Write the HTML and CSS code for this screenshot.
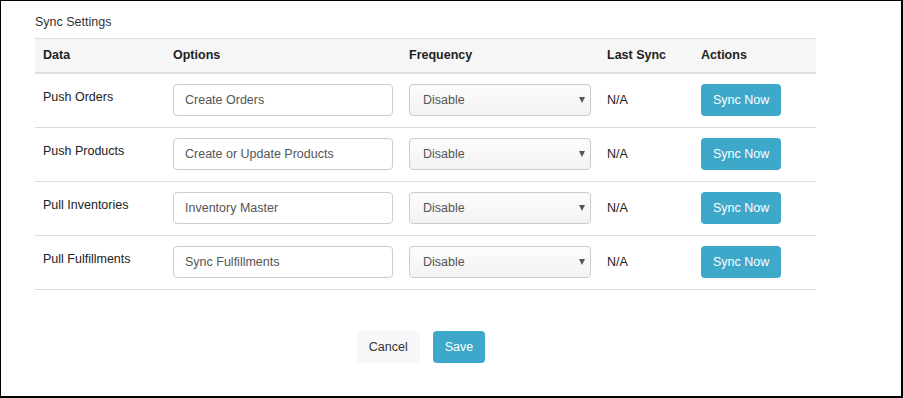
FILE: index.html
```html
<!DOCTYPE html>
<html>
<head>
<meta charset="utf-8">
<link rel="stylesheet" href="styles.css">
</head>
<body>
<div class="frame">
  <div class="title">Sync Settings</div>
  <table class="sync-table">
    <colgroup>
      <col class="c-data"><col class="c-options"><col class="c-freq"><col class="c-last"><col class="c-actions">
    </colgroup>
    <thead>
      <tr><th>Data</th><th>Options</th><th>Frequency</th><th>Last Sync</th><th>Actions</th></tr>
    </thead>
    <tbody>
      <tr>
        <td class="label">Push Orders</td>
        <td><input class="field" type="text" value="Create Orders"></td>
        <td><div class="select-wrap"><select class="select"><option>Disable</option></select></div></td>
        <td class="mid">N/A</td>
        <td><button class="btn btn-info">Sync Now</button></td>
      </tr>
      <tr>
        <td class="label">Push Products</td>
        <td><input class="field" type="text" value="Create or Update Products"></td>
        <td><div class="select-wrap"><select class="select"><option>Disable</option></select></div></td>
        <td class="mid">N/A</td>
        <td><button class="btn btn-info">Sync Now</button></td>
      </tr>
      <tr>
        <td class="label">Pull Inventories</td>
        <td><input class="field" type="text" value="Inventory Master"></td>
        <td><div class="select-wrap"><select class="select"><option>Disable</option></select></div></td>
        <td class="mid">N/A</td>
        <td><button class="btn btn-info">Sync Now</button></td>
      </tr>
      <tr>
        <td class="label">Pull Fulfillments</td>
        <td><input class="field" type="text" value="Sync Fulfillments"></td>
        <td><div class="select-wrap"><select class="select"><option>Disable</option></select></div></td>
        <td class="mid">N/A</td>
        <td><button class="btn btn-info">Sync Now</button></td>
      </tr>
    </tbody>
  </table>
  <div class="footer">
    <button class="btn btn-light">Cancel</button>
    <button class="btn btn-info">Save</button>
  </div>
</div>
</body>
</html>
```
FILE: styles.css
```css
html, body {
  margin: 0;
  padding: 0;
}
body {
  font-family: "Liberation Sans", Arial, sans-serif;
  font-size: 12.5px;
  color: #333;
  background: #fff;
}
.frame {
  box-sizing: border-box;
  width: 903px;
  height: 398px;
  border-style: solid;
  border-color: #000;
  border-width: 1px 2px 2px 1px;
  padding: 12px 0 0 34px;
}
.title {
  line-height: 18px;
  margin-bottom: 7px;
}
.sync-table {
  border-collapse: collapse;
  table-layout: fixed;
  width: 781px;
}
.c-data { width: 130px; }
.c-options { width: 236px; }
.c-freq { width: 198px; }
.c-last { width: 94px; }
.c-actions { width: 123px; }
.sync-table th {
  background: #f6f6f6;
  text-align: left;
  font-weight: bold;
  padding: 8px 8px;
  line-height: 17px;
  color: #222;
  border-top: 1px solid #dddddd;
  border-bottom: 2px solid #e0e0e0;
}
.sync-table td {
  padding: 10px 8px 11px;
  border-bottom: 1px solid #dddddd;
  vertical-align: middle;
  line-height: 18px;
  color: #222;
}
.sync-table td.label {
  vertical-align: top;
  padding-top: 14px;
}
.field {
  box-sizing: border-box;
  display: block;
  width: 100%;
  height: 32px;
  margin: 0;
  padding: 0 11px;
  border: 1px solid #cccccc;
  border-radius: 4px;
  font-family: inherit;
  font-size: 12.5px;
  color: #555;
  background: #fff;
  outline: none;
}
.select-wrap {
  position: relative;
}
.select-wrap::after {
  content: "";
  position: absolute;
  right: 6px;
  top: 13px;
  width: 0;
  height: 0;
  border-left: 3px solid transparent;
  border-right: 3px solid transparent;
  border-top: 6px solid #555;
  pointer-events: none;
}
.select {
  box-sizing: border-box;
  display: block;
  width: 100%;
  height: 32px;
  margin: 0;
  padding: 0 20px 0 13px;
  border: 1px solid #cccccc;
  border-radius: 4px;
  -webkit-appearance: none;
  appearance: none;
  font-family: inherit;
  font-size: 12.5px;
  color: #555;
  background: linear-gradient(#fcfcfc, #f3f3f3);
  outline: none;
}
.btn {
  box-sizing: border-box;
  height: 32px;
  padding: 0 12px;
  border: none;
  border-radius: 4px;
  font-family: inherit;
  font-size: 12.5px;
  line-height: 32px;
  cursor: pointer;
}
.btn-info {
  background: #3ea8cb;
  color: #fff;
}
.btn-light {
  background: #f6f7f9;
  color: #333;
}
.footer {
  width: 772px;
  display: flex;
  justify-content: center;
  gap: 13px;
  margin-top: 41px;
}
```
